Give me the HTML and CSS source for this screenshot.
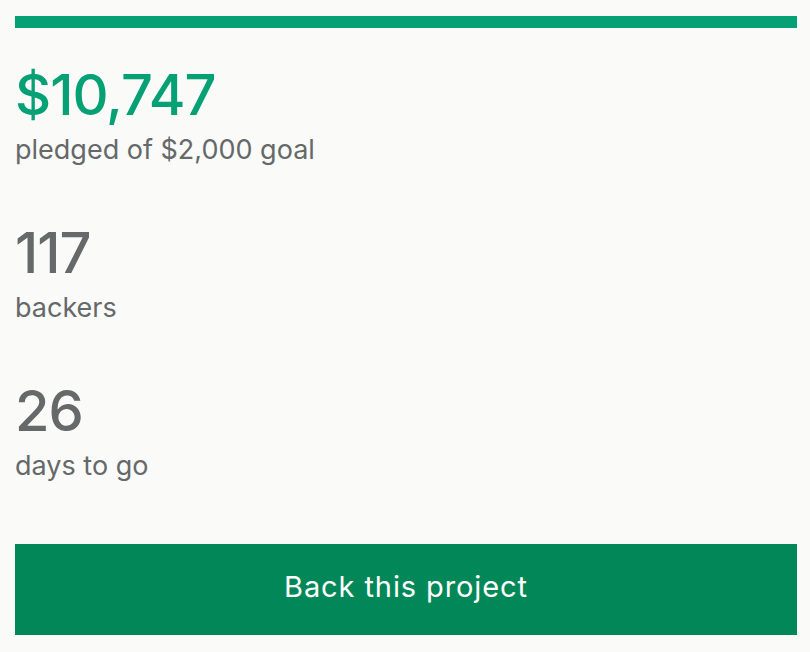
FILE: index.html
```html
<!DOCTYPE html>
<html lang="en">
<head>
<meta charset="utf-8">
<title>Project stats</title>
<link rel="stylesheet" href="styles.css">
</head>
<body>
<div class="panel">
  <div class="progress"><div class="progress-fill"></div></div>
  <div class="stats">
    <div class="stat">
      <div class="stat-value stat-value--green">$10,747</div>
      <div class="stat-label">pledged of $2,000 goal</div>
    </div>
    <div class="stat">
      <div class="stat-value">117</div>
      <div class="stat-label">backers</div>
    </div>
    <div class="stat">
      <div class="stat-value">26</div>
      <div class="stat-label">days to go</div>
    </div>
  </div>
  <button class="back-btn" type="button">Back this project</button>
</div>
</body>
</html>
```
FILE: styles.css
```css
html, body {
  margin: 0;
  padding: 0;
  background: #fafaf8;
}
body {
  font-family: Inter, Roboto, "Liberation Sans", sans-serif;
  color: #656969;
}
.panel {
  padding: 16px 13px 16px 15px;
  display: flex;
  flex-direction: column;
}
.progress {
  height: 12px;
  background: #e6e6e6;
}
.progress-fill {
  height: 100%;
  width: 100%;
  background: #05a074;
}
.stats {
  display: flex;
  flex-direction: column;
  gap: 51px;
  margin-top: 35px;
}
.stat-value {
  font-size: 56px;
  font-weight: 500;
  line-height: 64px;
  letter-spacing: -1px;
  color: #656969;
}
.stat-value--green {
  color: #05a074;
}
.stat-label {
  font-size: 27px;
  line-height: 40px;
  margin-top: 3px;
}
.back-btn {
  margin-top: 58px;
  height: 91px;
  border: 0;
  background: #028858;
  color: #fff;
  font-family: Inter, Roboto, "Liberation Sans", sans-serif;
  font-size: 29px;
  letter-spacing: 0.9px;
  padding: 0 0 6px;
  cursor: pointer;
}
```
